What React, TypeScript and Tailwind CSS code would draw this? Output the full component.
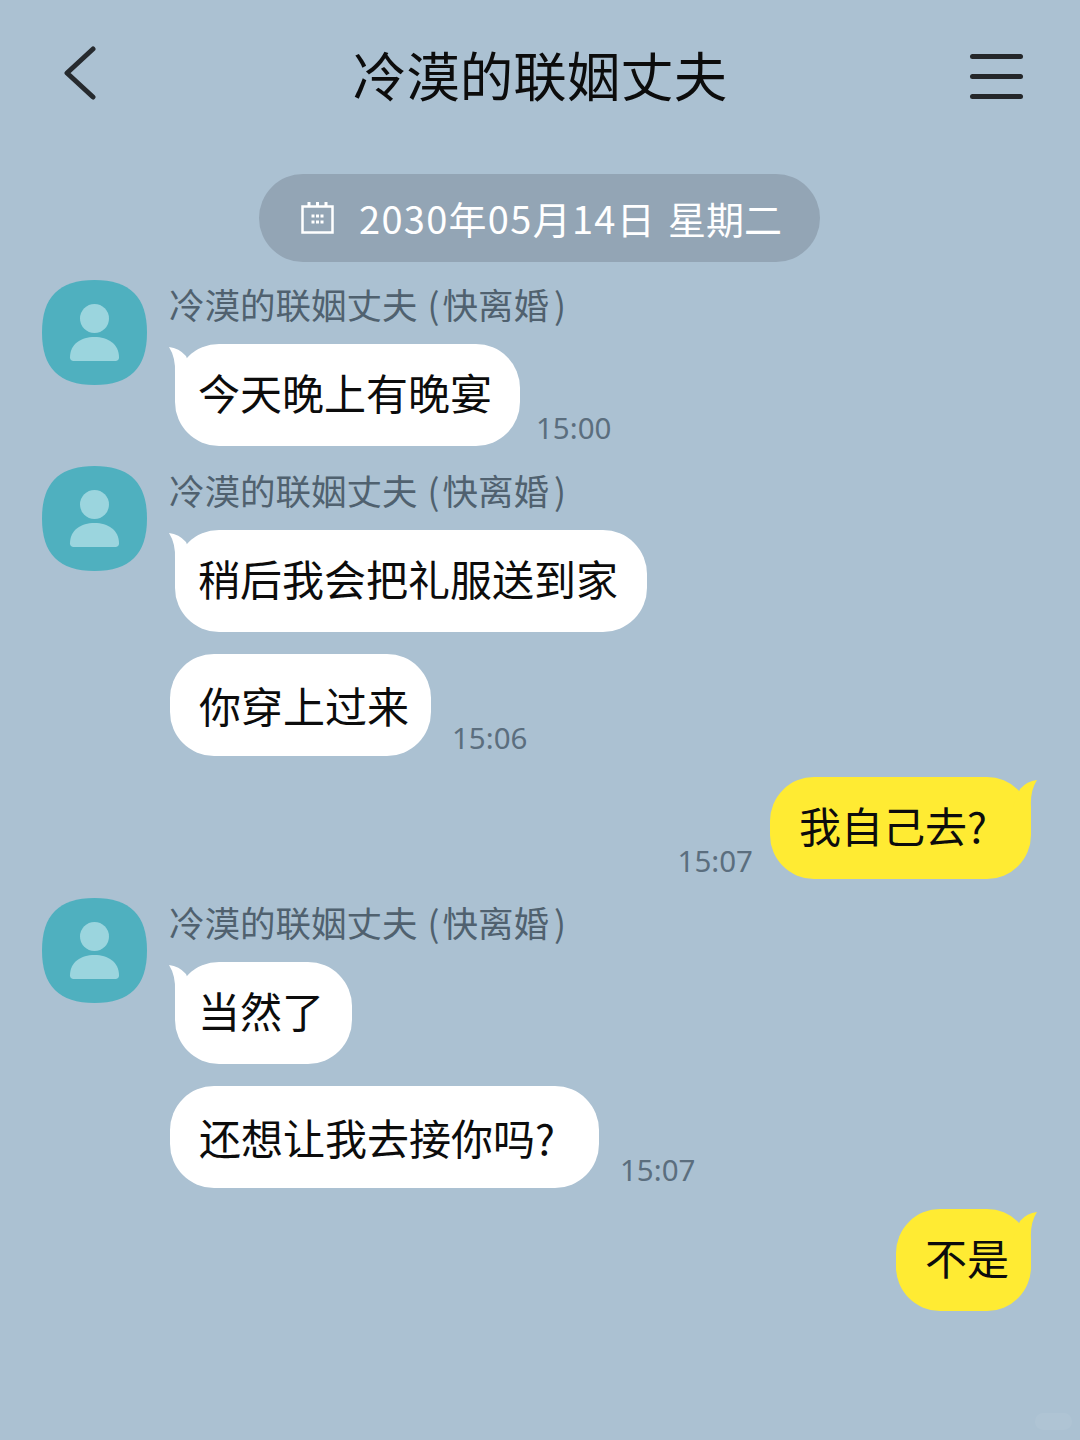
const FONT = "font-['Noto_Sans_CJK_SC','Noto_Sans',sans-serif]";

function Avatar() {
  return (
    <svg width="105" height="105" viewBox="0 0 105 105" className="shrink-0">
      <path d="M52.5 0C88 0 105 17 105 52.5S88 105 52.5 105 0 88 0 52.5 17 0 52.5 0Z" fill="#4fb0bf" />
      <circle cx="52.5" cy="38.5" r="14.5" fill="#9bd5de" />
      <path d="M28 77.5C28 64 39 57 52.5 57S77 64 77 77.5C77 79.5 75.5 81 73.5 81H31.5C29.5 81 28 79.5 28 77.5Z" fill="#9bd5de" />
    </svg>
  );
}

function Bubble({ text, self, tail, w }: { text: string; self?: boolean; tail?: boolean; w: string }) {
  return (
    <div className={`relative flex h-[102px] items-center rounded-[44px] text-[42px] text-[#0c0c0c] ${w} ${self ? "bg-[#ffeb33] pl-[29px] pb-[6px]" : "bg-white"} ${!self && tail ? "pl-[23px] pb-[6px]" : ""} ${!self && !tail ? "pl-[29px]" : ""}`}>
      {tail && !self && (
        <svg width="24" height="46" viewBox="0 0 24 46" className="absolute -left-[6px] top-0">
          <path d="M0 3Q10 4 17 12L24 30V46H6V30Q7 14 0 3Z" fill="#fff" />
        </svg>
      )}
      {tail && self && (
        <svg width="24" height="46" viewBox="0 0 24 46" className="absolute -right-[6px] top-0">
          <path d="M24 3Q14 4 7 12L0 30V46H18V30Q17 14 24 3Z" fill="#ffeb33" />
        </svg>
      )}
      <span className="leading-none whitespace-nowrap">{text}</span>
    </div>
  );
}

function Time({ t }: { t: string }) {
  return <span className="h-[37px] text-[29.5px] leading-[37px] text-[#5b6e7e] font-['Noto_Sans',sans-serif]">{t}</span>;
}

function Name() {
  return (
    <div className="-ml-px h-[50px] text-[35.5px] leading-[48px] text-[#50616f] whitespace-nowrap">
      冷漠的联姻丈夫 <span className="ml-[2px]">(</span>
      <span className="ml-[3px]">快离婚</span>
      <span className="ml-[5px]">)</span>
    </div>
  );
}

export default function App() {
  return (
    <div className={`relative h-[1440px] w-[1080px] overflow-hidden bg-[#abc1d2] ${FONT}`}>
      <header className="flex h-[154px] items-center justify-between pl-[64px] pr-[57px]">
        <div className="mb-[8px] w-[46px]">
          <svg width="32" height="54" viewBox="0 0 32 54" fill="none" stroke="#262a2e" strokeWidth="5" strokeLinecap="round" strokeLinejoin="round">
            <path d="M29 3 3 27 29 51" />
          </svg>
        </div>
        <h1 className="pb-[6px] text-[53.5px] font-normal leading-none text-[#0c0c0c]">冷漠的联姻丈夫</h1>
        <div className="mb-[2px] flex w-[53px] flex-col gap-[15px]">
          <div className="h-[5px] rounded-full bg-[#24272a]" />
          <div className="h-[5px] rounded-full bg-[#24272a]" />
          <div className="h-[5px] rounded-full bg-[#24272a]" />
        </div>
      </header>

      <div className="ml-[259px] mt-[20px] flex h-[88px] w-[561px] items-center rounded-[44px] bg-[#93a5b5] pl-[42px] text-[38px] text-white">
        <svg width="33" height="33" viewBox="0 0 33 33" fill="none" stroke="#fff" className="mb-[2px] mr-[25px] shrink-0">
          <path d="M1.5 5.5H31.5V31.5H1.5Z" strokeWidth="2.5" />
          <path d="M8 1V5M16.5 1V5M25 1V5" strokeWidth="3" />
          <path d="M10.5 15h3M15 15h3M19.5 15h3M10.5 21h3M15 21h3M19.5 21h3" strokeWidth="3" />
        </svg>
        <span className="leading-none tracking-[1.3px] whitespace-nowrap">2030年05月14日</span>
        <span className="ml-[12px] leading-none whitespace-nowrap">星期二</span>
      </div>

      <section className="mt-[18px] flex pl-[42px]">
        <Avatar />
        <div className="ml-[23px] flex flex-col">
          <Name />
          <div className="mt-[14px] ml-[5px] flex items-end gap-[16px]">
            <Bubble text="今天晚上有晚宴" tail w="w-[345px]" />
            <Time t="15:00" />
          </div>
        </div>
      </section>

      <section className="mt-[20px] flex pl-[42px]">
        <Avatar />
        <div className="ml-[23px] flex flex-col">
          <Name />
          <div className="mt-[14px] ml-[5px]">
            <Bubble text="稍后我会把礼服送到家" tail w="w-[472px]" />
          </div>
          <div className="mt-[22px] flex items-end gap-[21px]">
            <Bubble text="你穿上过来" w="w-[261px]" />
            <Time t="15:06" />
          </div>
        </div>
      </section>

      <section className="mt-[21px] flex items-end justify-end gap-[17px] pr-[49px]">
        <Time t="15:07" />
        <Bubble text="我自己去?" self tail w="w-[261px]" />
      </section>

      <section className="mt-[19px] flex pl-[42px]">
        <Avatar />
        <div className="ml-[23px] flex flex-col">
          <Name />
          <div className="mt-[14px] ml-[5px]">
            <Bubble text="当然了" tail w="w-[177px]" />
          </div>
          <div className="mt-[22px] flex items-end gap-[21px]">
            <Bubble text="还想让我去接你吗?" w="w-[429px]" />
            <Time t="15:07" />
          </div>
        </div>
      </section>

      <section className="mt-[21px] flex justify-end pr-[49px]">
        <Bubble text="不是" self tail w="w-[135px]" />
      </section>

      <div className="absolute right-[8px] bottom-[10px] h-[17px] w-[37px] rounded-full bg-white/5" />
    </div>
  );
}
